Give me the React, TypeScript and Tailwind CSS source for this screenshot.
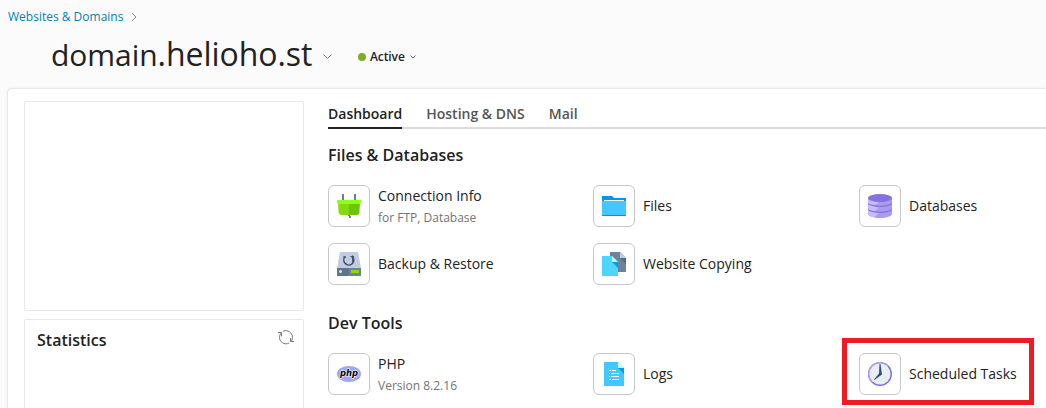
import type { ReactNode } from "react";

function PlugIcon() {
  return (
    <svg width="24" height="24" viewBox="0 0 24 24">
      <path d="M5 0h2v6H5zM17 0h2v6h-2z" fill="#6c7f99" />
      <path d="M11 20h2v2h1v2h-2v-2h-1z" fill="#6c7f99" />
      <path d="M1 9h11v12H5c-2 0-3-.7-3.300-2z" fill="#84db0b" />
      <path d="M12 9h11l-.7 10c-.3 1.300-1.300 2-3.300 2h-7z" fill="#6cc502" />
      <path d="M0 6h24v3l-1 1H1L0 9z" fill="#8cff1e" />
    </svg>
  );
}

function FolderIcon() {
  return (
    <svg width="24" height="24" viewBox="0 0 24 24">
      <path d="M0 2h10l2 2h12v18H0z" fill="#0095eb" />
      <path d="M0 7h24v14H0z" fill="#42c8ff" />
      <path d="M2 6h20v1H2z" fill="#fff" />
    </svg>
  );
}

function DatabaseIcon() {
  return (
    <svg width="24" height="24" viewBox="0 0 24 24">
      <path d="M0 4v16c0 2.200 5.400 4 12 4s12-1.800 12-4V4z" fill="#a99bf1" />
      <path d="M0 5v4c1 2 3 2.800 6 3.300L11 8zM0 10.500v4c1 2 3 2.800 6 3.300l5-4zM0 16v4c1 2 3 2.800 6 3.300l5-4z" fill="#c6bcfa" />
      <path d="M0 8c0 5 24 5 24 0v1c0 5-24 5-24 0zM0 14c0 5 24 5 24 0v1c0 5-24 5-24 0z" fill="#7967d3" />
      <ellipse cx="12" cy="4" rx="12" ry="4" fill="#8571df" />
    </svg>
  );
}

function BackupIcon() {
  return (
    <svg width="24" height="24" viewBox="0 0 24 24">
      <path d="M3 0h18l3 16H0z" fill="#c2cce0" />
      <path d="M0 16h12v8H0z" fill="#60738d" />
      <path d="M12 16h12v8H12z" fill="#70829c" />
      <path d="M8.200 4.500A5 5 0 1 0 15.800 5v5" fill="none" stroke="#3e536e" strokeWidth="1.500" />
      <path d="M13 4h4v4z" fill="#3e536e" />
      <path d="M6 4.500h3v1H6z" fill="#3e536e" />
      <circle cx="3.500" cy="19.500" r="1.500" fill="#c6f1ff" />
      <rect x="14" y="18" width="8" height="3" rx=".6" fill="#87df00" />
    </svg>
  );
}

function CopyIcon() {
  return (
    <svg width="24" height="24" viewBox="0 0 24 24">
      <path d="M8 0h10l6 6v14H8z" fill="#6d829e" />
      <path d="M18 0v6h6z" fill="#c2cce0" />
      <path d="M18 6h6v6z" fill="#536a88" />
      <path d="M0 4h10l6 6v14H0z" fill="#50d5ff" />
      <path d="M10 4v6h6z" fill="#d5f4ff" />
      <path d="M10 10h6v6z" fill="#009df2" />
    </svg>
  );
}

function PhpIcon() {
  return (
    <svg width="24" height="24" viewBox="0 0 24 24">
      <ellipse cx="12" cy="12" rx="12" ry="8" fill="#a2a6ef" />
      <text x="12" y="13.500" textAnchor="middle" textLength="18" lengthAdjust="spacingAndGlyphs" fontFamily="DejaVu Sans, sans-serif" fontSize="8.500" fontWeight="700" fontStyle="italic" stroke="#fff" strokeWidth="1.200" paintOrder="stroke" fill="#000">php</text>
    </svg>
  );
}

function LogsIcon() {
  return (
    <svg width="24" height="24" viewBox="0 0 24 24">
      <path d="M2 0h14l6 6v18H2z" fill="#42c8ff" />
      <path d="M16 0v6h6z" fill="#d5f4ff" />
      <path d="M16 6h6v6z" fill="#009df2" />
      <path d="M7 8h2v1H7zM7 11h1v1H7zM7 14h1v1H7zM7 17h2v1H7zM10 8h4v1h-4zM9 11h8v1H9zM9 14h8v1H9zM10 17h7v1h-7z" fill="#fff" />
    </svg>
  );
}

function ClockIcon() {
  return (
    <svg width="24" height="24" viewBox="0 0 24 24">
      <circle cx="12" cy="12" r="12" fill="#8571df" />
      <path d="M20.500 3.500A12 12 0 1 0 3.500 20.500z" fill="#ab9cf3" />
      <circle cx="12" cy="12" r="10.500" fill="#e8eff4" />
      <path d="M11.500 2h1L14 12.500 6.500 18l-.5-.5 5-6z" fill="#36506c" />
    </svg>
  );
}

function Chevron({ className }: { className: string }) {
  return (
    <svg className={className} viewBox="0 0 9 6" fill="none" stroke="currentColor">
      <path d="m.5.500 4 4 4-4" />
    </svg>
  );
}

function Tool({ icon, title, note }: { icon: ReactNode; title: string; note?: string }) {
  return (
    <div className="flex h-[42px] items-center">
      <div className="flex size-[42px] shrink-0 items-center justify-center rounded-[6px] border border-[#c8c8c8] bg-white">
        {icon}
      </div>
      <div className="ml-2 flex flex-col whitespace-nowrap">
        <span className={note ? "mt-0.5 text-[14px] leading-5 text-[#222]" : "text-[14px] leading-5 text-[#222]"}>{title}</span>
        {note && <span className="mt-0.5 text-[12px] leading-5 text-[#737373]">{note}</span>}
      </div>
    </div>
  );
}

export default function App() {
  return (
    <div className="flex h-[408px] w-[1046px] flex-col overflow-hidden bg-[#fbfbfb] font-['Open_Sans',sans-serif] text-[#222]">
      <header className="h-[88px] shrink-0">
        <nav className="flex h-[33px] items-center pl-2 text-[12px] text-[#007fb3]">
          <a>Websites &amp; Domains</a>
          <svg className="ml-2 text-[#888]" width="6" height="10" viewBox="0 0 6 10" fill="none" stroke="currentColor">
            <path d="m1 1 4 4-4 4" />
          </svg>
        </nav>
        <div className="flex h-[46px] items-center pl-[51px]">
          <h1 className="-mt-1 w-[261px] text-[32px] leading-[42px] tracking-[-0.05px] whitespace-nowrap">
            <span className="text-[30px]">domain</span>.helioho.st
          </h1>
          <Chevron className="mt-0.5 ml-[11px] h-1.5 w-[9px] text-[#777]" />
          <span className="mt-0.5 ml-[26px] size-2 rounded-full bg-[#7fae22]" />
          <span className="mt-0.5 ml-1 w-9 text-[12px] font-semibold tracking-[-0.1px]">Active</span>
          <svg className="mt-0.5 ml-1 text-[#666]" width="6" height="4" viewBox="0 0 6 4" fill="none" stroke="currentColor">
            <path d="M.5.5 3 3 5.500.5" />
          </svg>
        </div>
      </header>

      <main className="ml-[7px] flex h-[340px] shrink-0 rounded-tl-[5px] border-t border-l border-[#e8e8e8] bg-white pt-3 pl-4 shadow-[0_0_3px_rgba(0,0,0,0.06)]">
        <aside className="flex w-[280px] shrink-0 flex-col gap-2">
          <div className="h-[210px] shrink-0 rounded-[2px] border border-[#e8e8e8]" />
          <section className="flex h-[120px] shrink-0 items-start justify-between rounded-[2px] border border-[#e8e8e8] pt-2 pr-[9px] pl-3">
            <h2 className="text-[16px] leading-6 font-semibold">Statistics</h2>
            <svg className="mt-0.5" width="16" height="15" viewBox="0 0 16 15" fill="none" stroke="#777">
              <path d="M5 1.300C9.500-.7 14.500 2.500 14.500 7.500c0 1.300-.4 2.500-1.200 3.800M11 13.200C6.500 15.200 1.500 12 1.500 7.500c0-1.700.5-3 1.300-4.200" />
              <path d="M0 2.500h3.500v3.700M16 11.500h-3.500V8" />
            </svg>
          </section>
        </aside>

        <section className="ml-6 min-w-0 flex-1">
          <nav className="flex h-7 gap-6 border-b-2 border-[#dcdcdc] text-[14px] leading-[26px] font-semibold text-[#555]">
            <a className="h-7 border-b-2 border-[#222] text-[#222]">Dashboard</a>
            <a>Hosting &amp; DNS</a>
            <a>Mail</a>
          </nav>
          <h2 className="mt-[14px] text-[16px] leading-6 font-semibold">Files &amp; Databases</h2>
          <div className="mt-[18px] grid grid-cols-[265px_266px_187px] gap-y-4">
            <Tool icon={<PlugIcon />} title="Connection Info" note="for FTP, Database" />
            <Tool icon={<FolderIcon />} title="Files" />
            <Tool icon={<DatabaseIcon />} title="Databases" />
            <Tool icon={<BackupIcon />} title="Backup &amp; Restore" />
            <Tool icon={<CopyIcon />} title="Website Copying" />
          </div>
          <h2 className="mt-[26px] text-[16px] leading-6 font-semibold">Dev Tools</h2>
          <div className="mt-[3px] grid grid-cols-[265px_249px_192px] items-start">
            <div className="pt-[15px]"><Tool icon={<PhpIcon />} title="PHP" note="Version 8.2.16" /></div>
            <div className="pt-[15px]"><Tool icon={<LogsIcon />} title="Logs" /></div>
            <div className="h-[67px] w-[192px] border-[5px] border-[#ed1c24] pt-[10px] pl-3">
              <Tool icon={<ClockIcon />} title="Scheduled Tasks" />
            </div>
          </div>
        </section>
      </main>
    </div>
  );
}
